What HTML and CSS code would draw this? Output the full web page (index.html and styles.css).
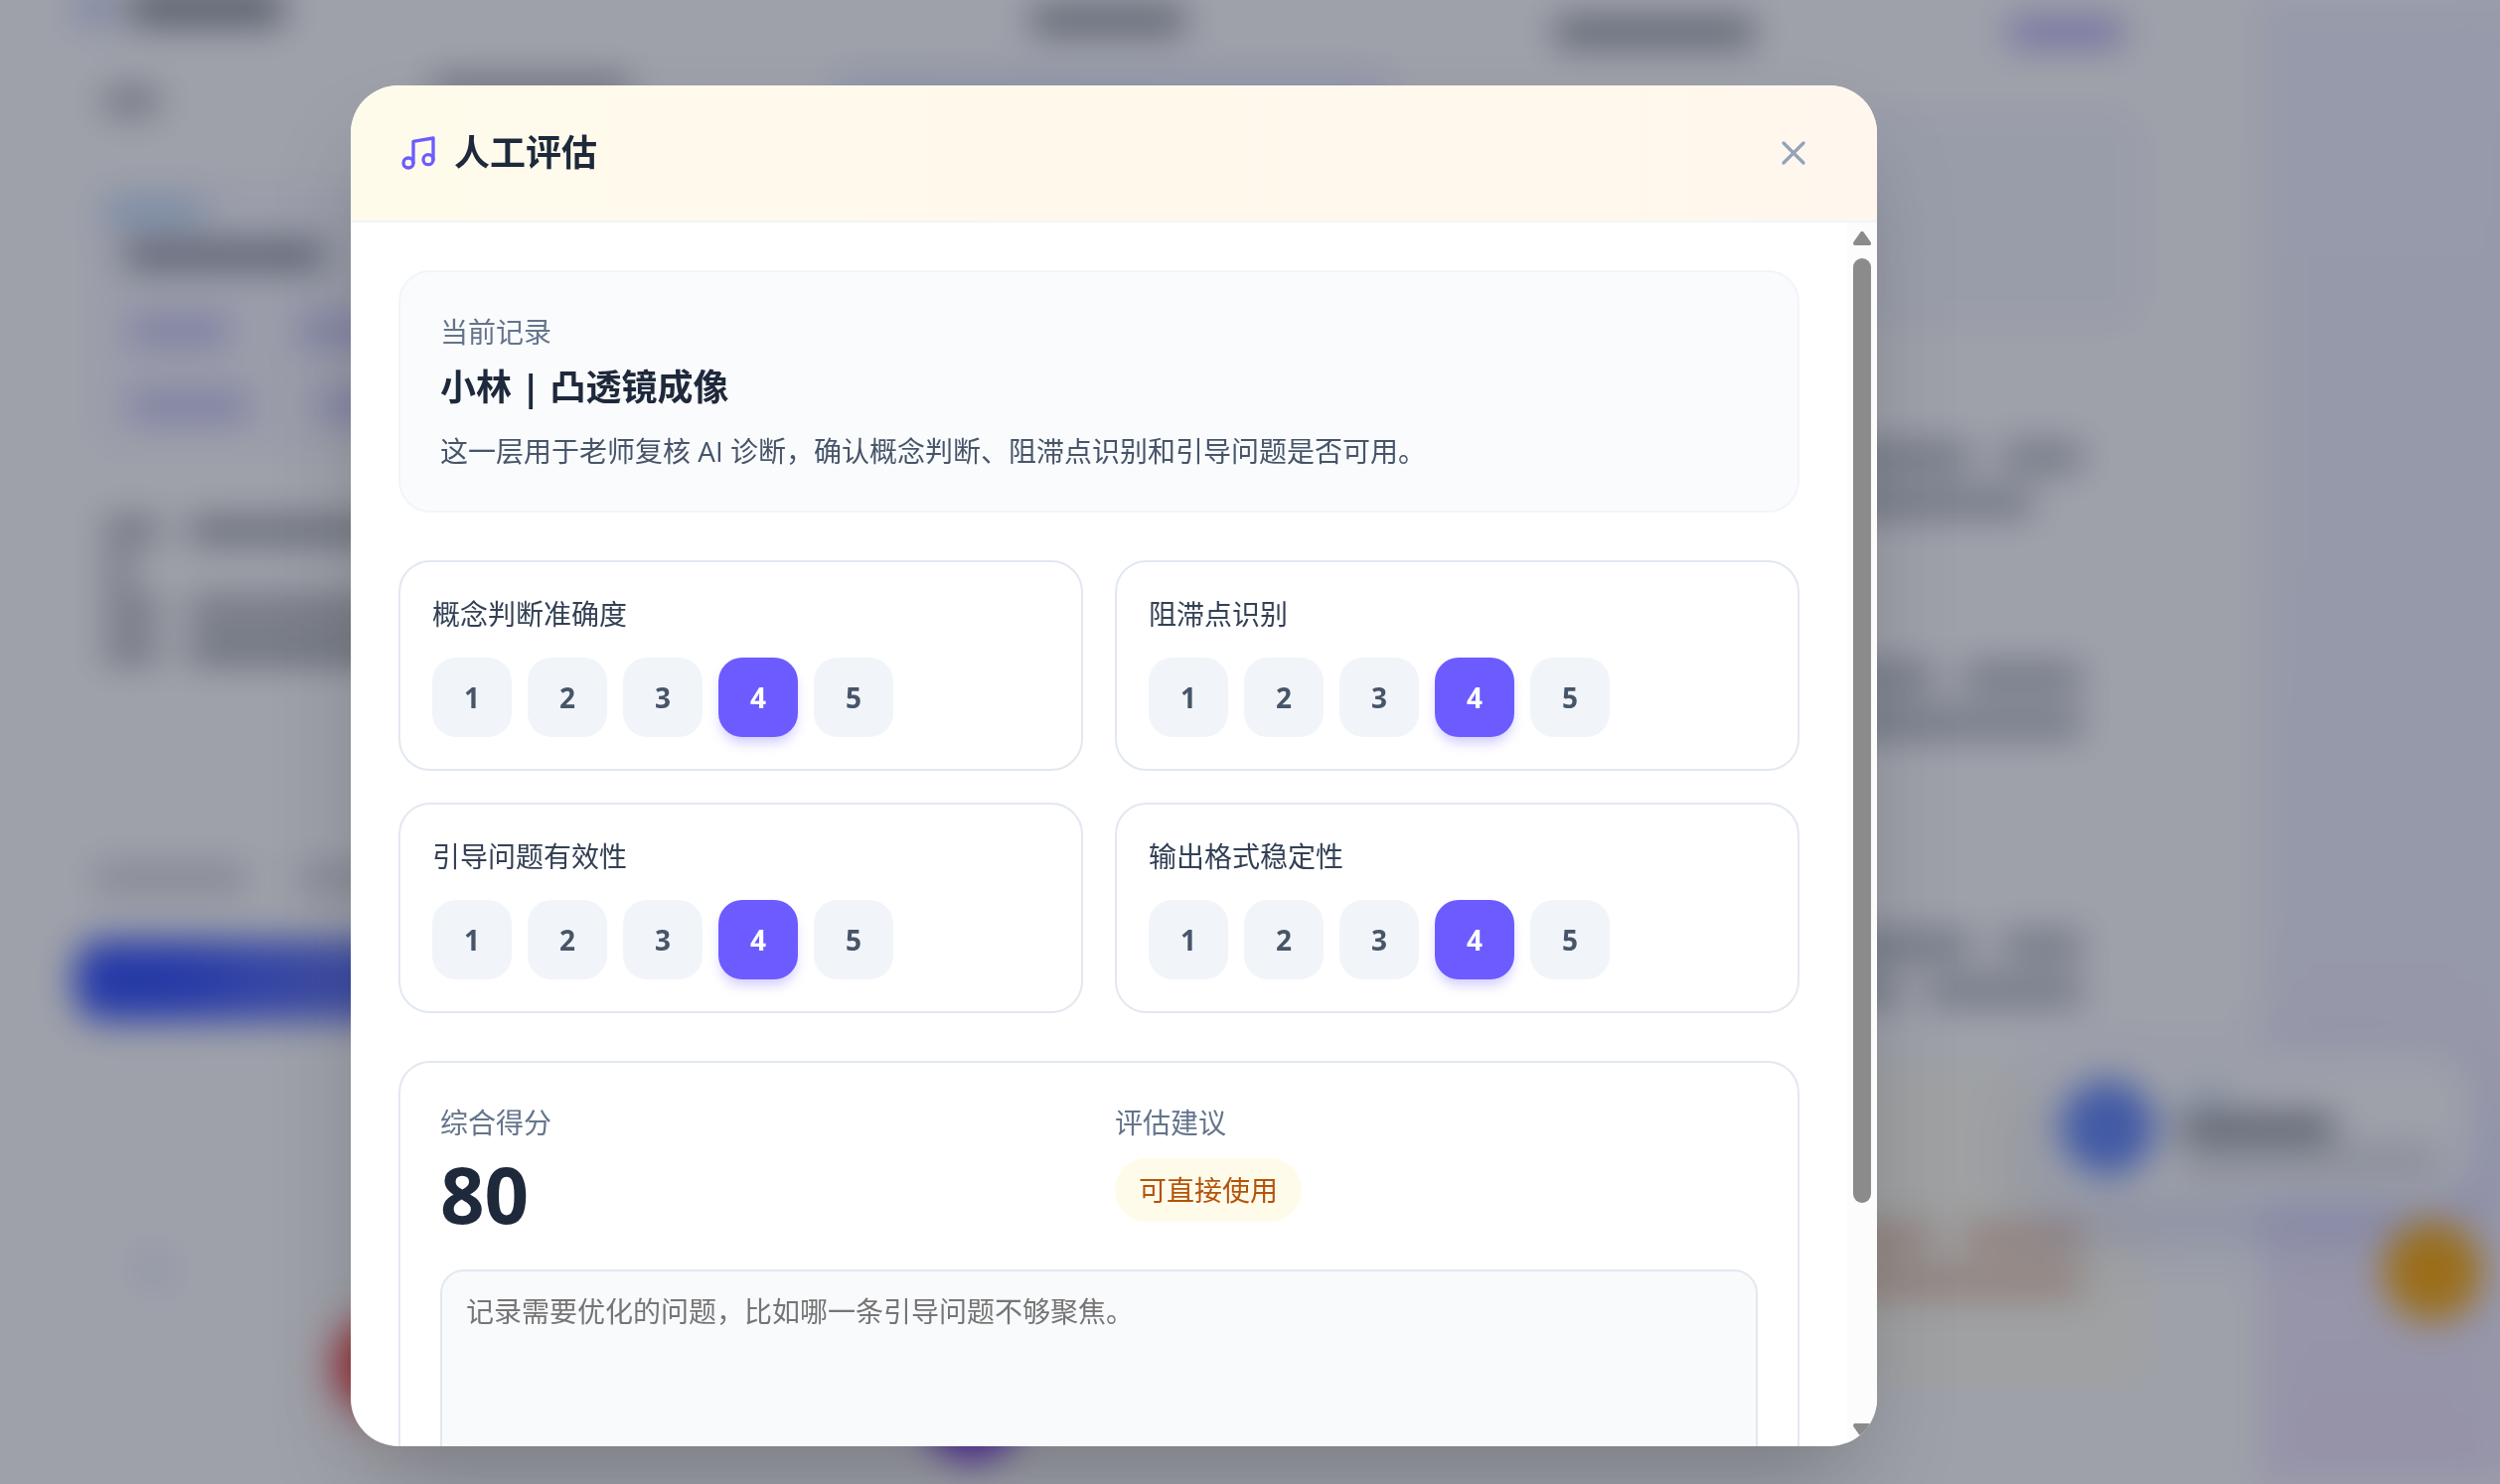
FILE: index.html
```html
<!DOCTYPE html>
<html lang="zh-CN">
<head>
    <meta charset="UTF-8">
    <meta name="viewport" content="width=device-width, initial-scale=1.0">
    <title>人工评估</title>
    <link rel="stylesheet" href="styles.css">
</head>
<body>
    <!-- Page behind the dialog -->
    <div class="page" aria-hidden="true">
        <div class="workspace">
            <div class="col">
                <div class="row head"><i class="bar icon"></i><i class="bar dark w155"></i></div>
                <div class="row sub"><i class="bar gray w55"></i><i class="bar gray w200"></i></div>
                <div class="topic">
                    <i class="bar sky w100"></i>
                    <i class="bar dark w200 topic-name"></i>
                    <div class="row chips"><i class="bar violet w100"></i><i class="bar violet w100"></i></div>
                    <div class="row chips"><i class="bar violet w120"></i><i class="bar violet w100"></i></div>
                </div>
                <div class="talk">
                    <div class="row"><i class="bar gray w55"></i><i class="bar ink grow"></i></div>
                    <div class="row"><i class="bar gray w30"></i></div>
                    <div class="row"><i class="bar gray w55"></i><i class="bar gray grow"></i></div>
                    <div class="row"><i class="bar gray w55"></i><i class="bar ink grow"></i></div>
                </div>
                <div class="row tools"><i class="bar soft w155"></i><i class="bar soft w155"></i></div>
                <div class="start"></div>
                <div class="dot"></div>
            </div>
            <div class="col">
                <div class="row mid-head"><i class="bar dark w155"></i></div>
                <div class="band"></div>
            </div>
            <div class="col">
                <div class="row right-head"><i class="bar dark w200"></i><i class="bar badge w120"></i></div>
                <div class="panel"></div>
                <div class="note">
                    <div class="row"><i class="bar slate grow"></i><i class="bar slate w80"></i></div>
                    <div class="row"><i class="bar slate grow"></i><i class="end"></i></div>
                </div>
                <div class="note">
                    <div class="row"><i class="bar slate grow"></i><i class="bar slate w120"></i></div>
                    <div class="row"><i class="bar slate grow"></i></div>
                </div>
                <div class="note last">
                    <div class="row"><i class="bar slate grow"></i><i class="bar slate w80"></i></div>
                    <div class="row"><i class="bar slate grow"></i><i class="bar slate w155"></i></div>
                </div>
                <div class="tip">
                    <div class="row"><i class="bar orange grow"></i><i class="bar orange w120"></i></div>
                    <div class="row"><i class="bar orange grow"></i></div>
                </div>
            </div>
        </div>
        <div class="helper">
            <div class="helper-icon"></div>
            <div class="helper-text">
                <i class="bar pale w55"></i>
                <i class="bar dark w155"></i>
                <i class="bar faint"></i>
            </div>
        </div>
        <div class="float amber"></div>
        <div class="float red"></div>
        <div class="float purple"></div>
    </div>

    <div class="overlay">
        <div class="modal" role="dialog" aria-modal="true" aria-labelledby="modal-title">
            <header class="modal-header">
                <svg class="icon-music" viewBox="0 0 24 24" fill="none" stroke="currentColor" stroke-width="2" stroke-linecap="round" stroke-linejoin="round" aria-hidden="true">
                    <path d="M9 18V5l12-2v13"/>
                    <circle cx="6" cy="18" r="3"/>
                    <circle cx="18" cy="16" r="3"/>
                </svg>
                <h2 id="modal-title">人工评估</h2>
                <button type="button" class="close" aria-label="关闭">
                    <svg viewBox="0 0 24 24" fill="none" stroke="currentColor" stroke-width="2" stroke-linecap="round" aria-hidden="true">
                        <path d="M18 6 6 18M6 6l12 12"/>
                    </svg>
                </button>
            </header>

            <div class="modal-main">
                <div class="modal-body">
                    <section class="record">
                        <p class="label">当前记录</p>
                        <h3>小林 | 凸透镜成像</h3>
                        <p class="desc">这一层用于老师复核 AI 诊断，确认概念判断、阻滞点识别和引导问题是否可用。</p>
                    </section>

                    <div class="ratings">
                        <section class="rating">
                            <h4>概念判断准确度</h4>
                            <div class="scores">
                                <button type="button">1</button>
                                <button type="button">2</button>
                                <button type="button">3</button>
                                <button type="button" class="active">4</button>
                                <button type="button">5</button>
                            </div>
                        </section>
                        <section class="rating">
                            <h4>阻滞点识别</h4>
                            <div class="scores">
                                <button type="button">1</button>
                                <button type="button">2</button>
                                <button type="button">3</button>
                                <button type="button" class="active">4</button>
                                <button type="button">5</button>
                            </div>
                        </section>
                        <section class="rating">
                            <h4>引导问题有效性</h4>
                            <div class="scores">
                                <button type="button">1</button>
                                <button type="button">2</button>
                                <button type="button">3</button>
                                <button type="button" class="active">4</button>
                                <button type="button">5</button>
                            </div>
                        </section>
                        <section class="rating">
                            <h4>输出格式稳定性</h4>
                            <div class="scores">
                                <button type="button">1</button>
                                <button type="button">2</button>
                                <button type="button">3</button>
                                <button type="button" class="active">4</button>
                                <button type="button">5</button>
                            </div>
                        </section>
                    </div>

                    <section class="summary">
                        <div class="summary-grid">
                            <div>
                                <p class="label">综合得分</p>
                                <p class="total">80</p>
                            </div>
                            <div>
                                <p class="label">评估建议</p>
                                <span class="pill">可直接使用</span>
                            </div>
                        </div>
                        <textarea aria-label="评估备注" placeholder="记录需要优化的问题，比如哪一条引导问题不够聚焦。"></textarea>
                    </section>
                </div>

                <div class="scrollbar" aria-hidden="true">
                    <svg class="arrow" viewBox="0 0 18 14"><path d="M9 2 16 12H2z"/></svg>
                    <div class="track"><div class="thumb"></div></div>
                    <svg class="arrow" viewBox="0 0 18 14"><path d="M9 12 16 2H2z"/></svg>
                </div>
            </div>
        </div>
    </div>
</body>
</html>
```

FILE: styles.css
```css
* {
    box-sizing: border-box;
}
body {
    margin: 0;
    height: 100vh;
    overflow: hidden;
    font-family: "Open Sans", "Noto Sans CJK SC", sans-serif;
    font-size: 28px;
    line-height: 40px;
    color: #1e293b;
}
h2, h3, h4, p {
    margin: 0;
}
button, textarea {
    font: inherit;
}

/* Page behind the dialog */
.page {
    position: relative;
    height: 100vh;
    background: linear-gradient(180deg, #f1f2ff 0%, #f1f1fe 60%, #f0e6fd 100%);
    /* keeps the blur from fading out at the window edges */
    box-shadow: 60px 0 #f1f1fe, -60px 0 #fefefe, 0 -60px #fefefe, 0 60px #fefefe;
    filter: blur(18px);
}
.workspace {
    display: grid;
    grid-template-columns: 650fr 620fr 600fr;
    column-gap: 110px;
    min-height: 100vh;
    margin-right: 241px;
    padding: 0 110px 0 75px;
    background: #fefefe;
}
.row {
    display: flex;
    gap: 30px;
}
.bar {
    display: block;
    height: 24px;
    border-radius: 6px;
}
.w30 { width: 30px; }
.w55 { width: 55px; }
.w80 { width: 80px; }
.w100 { width: 100px; }
.w120 { width: 120px; }
.w155 { width: 155px; }
.w200 { width: 200px; }
.grow { flex: 1; }
.end { width: 20px; }
.dark { background: #7d818d; }
.ink { background: #94979e; }
.gray { background: #a2a4aa; }
.slate { background: #a3a7b4; }
.soft { background: #c9ccd5; }
.faint { background: #d3d5dd; }
.pale { background: #d9e6f8; }
.sky { background: #b4d2f6; }
.violet { background: #bcb8f0; }
.badge { background: #a899f0; border-radius: 12px; }
.orange { background: #e0b9a0; }
.head { gap: 15px; margin-top: -8px; }
.head .bar { height: 32px; }
.head .icon { width: 40px; background: #c5d0fa; }
.sub {
    justify-content: space-between;
    align-items: flex-end;
    height: 36px;
    margin: 54px 90px 0 30px;
}
.sub .w200 { align-self: flex-start; }
.topic {
    height: 270px;
    margin: 71px 0 0 15px;
    padding: 16px;
    border-radius: 32px;
    background: #f8f7ff;
}
.topic-name { margin: 20px 0 0 20px; }
.chips {
    gap: 72px;
    margin: 52px 0 0 24px;
}
.talk {
    display: flex;
    flex-direction: column;
    gap: 16px;
    margin: 67px 0 0 30px;
}
.tools {
    gap: 50px;
    margin: 206px 0 0 20px;
}
.start {
    height: 82px;
    margin-top: 50px;
    border-radius: 28px;
    background: linear-gradient(90deg, #3652fb 0%, #3652fb 15%, #5f72f2 40%, #3652fb 100%);
}
.dot {
    width: 30px;
    height: 30px;
    margin: 235px 0 0 65px;
    border-radius: 50%;
    background: #e0e0fa;
}
.mid-head {
    justify-content: center;
    margin: 8px 60px 0 0;
}
.band {
    height: 200px;
    margin: 38px 50px 0 0;
    border-radius: 24px;
    background: linear-gradient(90deg, #e4ecff, #ecebff);
}
.right-head {
    justify-content: space-between;
    margin: 20px 26px 0 0;
}
.panel {
    height: 222px;
    margin: 64px 8px 0 0;
    border-radius: 32px;
    background: #f6f7ff;
}
.note {
    display: flex;
    flex-direction: column;
    gap: 22px;
    margin: 118px 70px 0 0;
}
.note + .note { margin-top: 152px; }
.note.last { margin-top: 200px; }
.tip {
    display: flex;
    flex-direction: column;
    gap: 20px;
    height: 315px;
    margin-top: 70px;
    padding: 154px 70px 0 0;
    border-radius: 32px;
    background: #fffdf3;
}
.helper {
    position: absolute;
    top: 1060px;
    right: 26px;
    display: flex;
    align-items: center;
    gap: 24px;
    width: 440px;
    height: 150px;
    padding: 0 35px 0 22px;
    border-radius: 48px;
    background: #fefefe;
    box-shadow: 0 24px 60px rgba(79, 98, 230, 0.26);
}
.helper-icon {
    width: 98px;
    height: 98px;
    border-radius: 50%;
    background: #6587f7;
}
.helper-text {
    display: flex;
    flex: 1;
    flex-direction: column;
    gap: 10px;
}
.float {
    position: absolute;
    width: 100px;
    height: 100px;
    border-radius: 50%;
}
.amber { top: 1230px; right: 18px; background: #f8a810; }
.red { top: 1324px; left: 336px; background: #ef4444; box-shadow: 0 8px 60px rgba(239, 68, 68, 0.3); }
.purple { top: 1370px; left: 928px; background: #7c3aed; }

/* Dialog */
.overlay {
    position: fixed;
    inset: 0;
    display: flex;
    padding: 86px 627px 38px 353px;
    background: rgba(15, 23, 42, 0.4);
}
.modal {
    display: flex;
    flex: 1;
    flex-direction: column;
    min-width: 0;
    overflow: hidden;
    border-radius: 48px;
    background: #fff;
    box-shadow: 0 50px 100px -24px rgba(0, 0, 0, 0.25);
}
.modal-header {
    display: flex;
    flex: none;
    align-items: center;
    gap: 16px;
    padding: 40px 48px;
    border-bottom: 2px solid #f1f5f9;
    background: linear-gradient(90deg, #fffbeb, #fff7ed);
}
.modal-header h2 {
    font-size: 36px;
    line-height: 56px;
}
.icon-music {
    width: 40px;
    height: 40px;
    color: #6c5cff;
}
.close {
    display: flex;
    margin: -8px 0 -8px auto;
    padding: 16px;
    border: 0;
    border-radius: 50%;
    background: none;
    color: #94a3b8;
    cursor: pointer;
}
.close svg {
    width: 40px;
    height: 40px;
}
.modal-main {
    display: flex;
    flex: 1;
    min-height: 0;
}
.modal-body {
    display: flex;
    flex: 1;
    flex-direction: column;
    gap: 48px;
    min-width: 0;
    padding: 48px;
    overflow-y: auto;
    scrollbar-width: none;
}
.scrollbar {
    display: flex;
    flex: none;
    flex-direction: column;
    align-items: center;
    width: 30px;
    padding: 9px 0;
    background: #fcfcfc;
}
.arrow {
    flex: none;
    width: 18px;
    height: 14px;
    fill: #8b8b8b;
    stroke: #8b8b8b;
    stroke-width: 4;
    stroke-linejoin: round;
}
.track {
    flex: 1;
    width: 18px;
    padding: 13px 0;
}
.thumb {
    height: 82%;
    border-radius: 9px;
    background: #8b8b8b;
}
.label {
    color: #64748b;
}
.record {
    padding: 40px;
    border: 2px solid #f1f5f9;
    border-radius: 32px;
    background: #fafbfd;
}
.record h3 {
    margin-top: 8px;
    font-size: 36px;
    line-height: 56px;
}
.desc {
    margin-top: 16px;
    color: #475569;
}
.ratings {
    display: grid;
    grid-template-columns: 1fr 1fr;
    gap: 32px;
}
.rating {
    padding: 32px;
    border: 2px solid #e2e8f0;
    border-radius: 32px;
}
.rating h4 {
    font-size: 28px;
    font-weight: 400;
    color: #334155;
}
.scores {
    display: flex;
    gap: 16px;
    margin-top: 24px;
}
.scores button {
    width: 80px;
    height: 80px;
    padding: 0;
    border: 0;
    border-radius: 24px;
    background: #f1f5f9;
    color: #475569;
    font-weight: 700;
    cursor: pointer;
}
.scores .active {
    background: #6c5cff;
    color: #fff;
    box-shadow: 0 8px 12px -2px rgba(108, 92, 255, 0.3);
}
.summary {
    padding: 40px;
    border: 2px solid #e2e8f0;
    border-radius: 32px;
}
.summary-grid {
    display: grid;
    grid-template-columns: 1fr 1fr;
    gap: 32px;
}
.total {
    margin: 12px 0 4px;
    font-size: 78px;
    font-weight: 700;
    line-height: 80px;
}
.pill {
    display: inline-block;
    margin-top: 16px;
    padding: 12px 24px;
    border-radius: 32px;
    background: #fffbeb;
    color: #b45309;
}
textarea {
    display: block;
    width: 100%;
    height: 364px;
    margin-top: 32px;
    padding: 20px 24px;
    border: 2px solid #e2e8f0;
    border-radius: 24px;
    background: #f9fafc;
    color: #334155;
    resize: none;
}
textarea::placeholder {
    color: #757575;
}
```
